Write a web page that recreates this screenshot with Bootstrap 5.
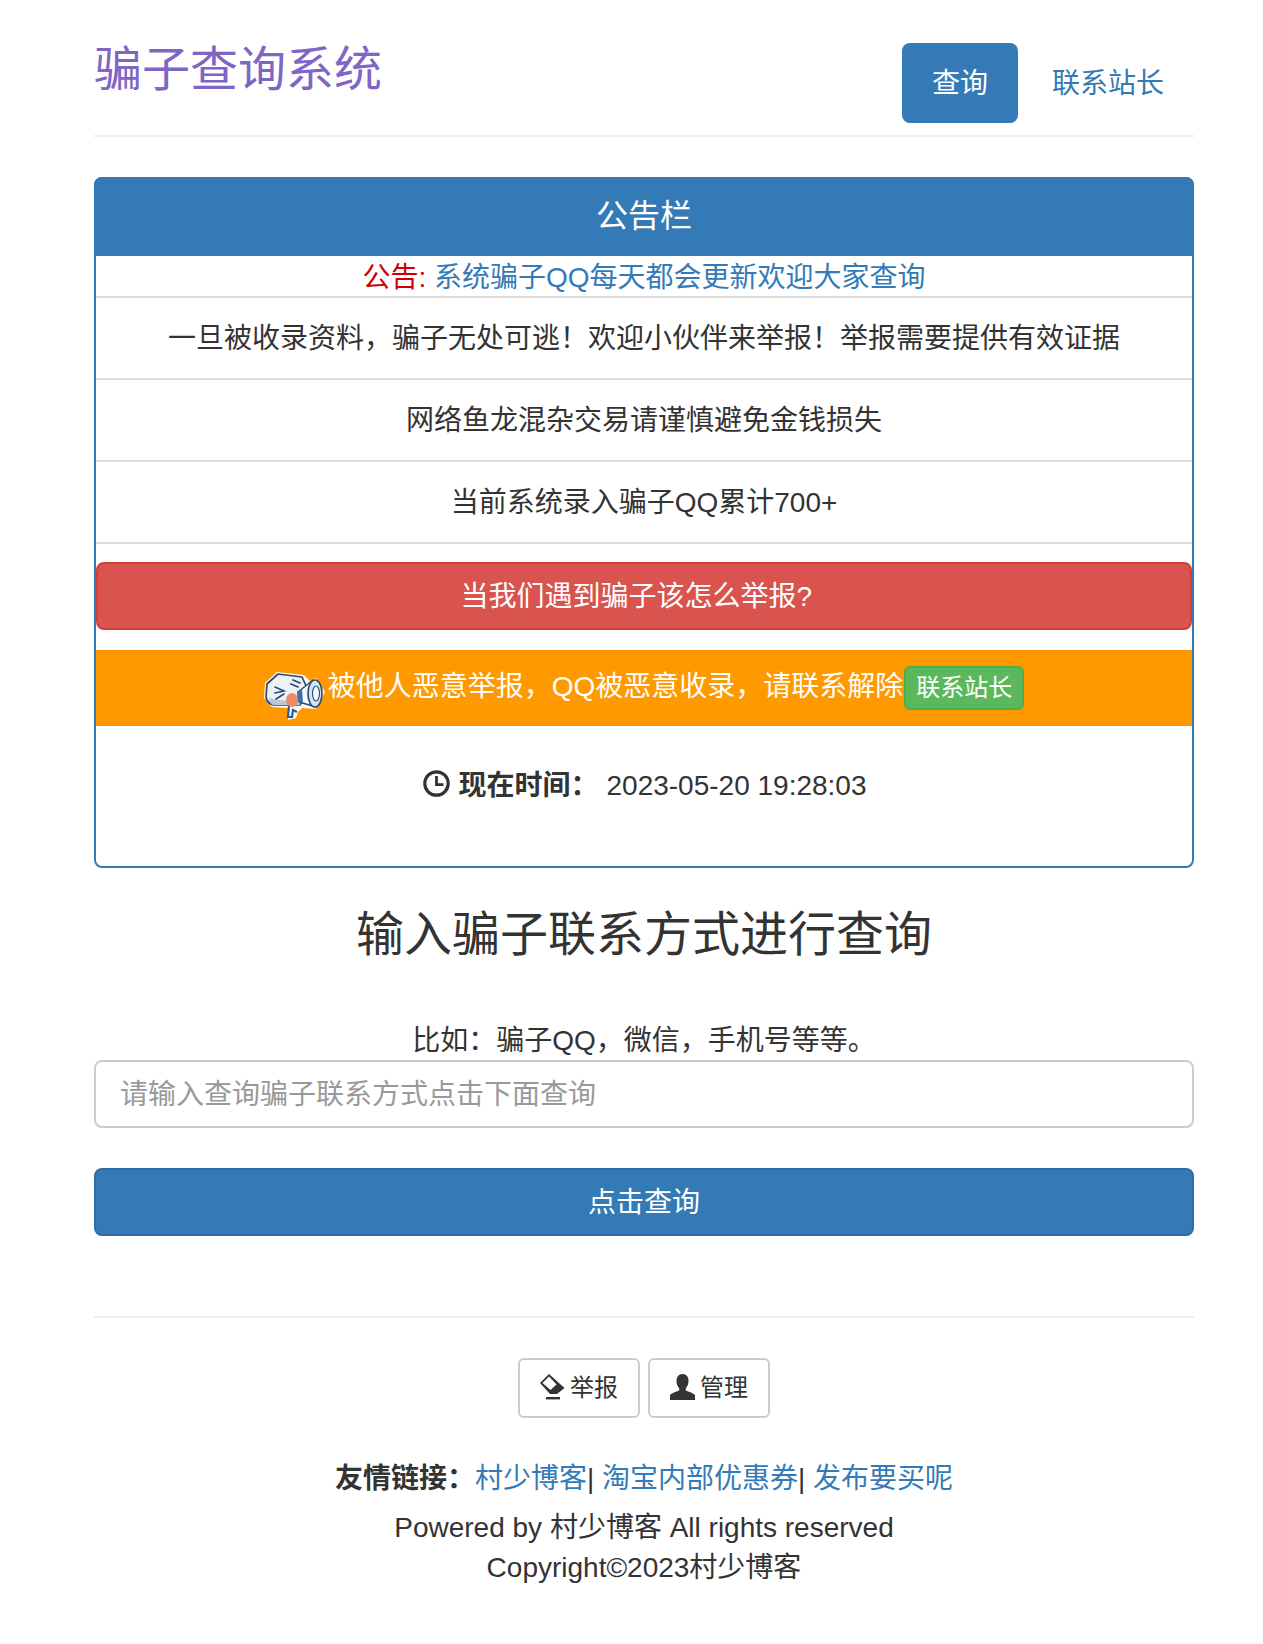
<!DOCTYPE html>
<html lang="zh-CN">
<head>
<meta charset="utf-8">
<title>骗子查询系统</title>
<link rel="stylesheet" href="https://cdn.jsdelivr.net/npm/bootstrap@5.3.0/dist/css/bootstrap.min.css">
<style>
html,body{background:#fff}
body{font-family:"Liberation Sans","Noto Sans CJK SC",sans-serif;font-size:28px;line-height:40px;color:#333;height:1644px;overflow:hidden}
a{color:#337ab7;text-decoration:none}
.page-wrap{width:1100px;margin-left:94px}
.site-head{padding-top:43px;padding-bottom:12px;border-bottom:2px solid #eee;margin-bottom:40px}
.site-title{font-size:48px;line-height:53px;color:#7f65c6;font-weight:400;margin:0}
.site-pills{gap:4px}
.site-pills .nav-link{font-size:28px;line-height:40px;padding:21px 30px 19px;color:#337ab7;border-radius:8px}
.site-pills .nav-link.active{background:#337ab7;color:#fff}
.notice-card{border:2px solid #337ab7;border-radius:8px;height:691px;display:block}
.notice-head{background:#337ab7;color:#fff;border:0;font-size:32px;line-height:35px;padding:22px 30px 22px;margin:-2px -2px 0;border-radius:8px 8px 0 0!important}
.notice-card>.notice-list{border:0}
.notice-list .list-group-item{font-size:28px;line-height:40px;color:#333;padding:21px 30px 19px;border-width:0 0 2px!important;border-style:solid;border-color:#ddd;background:#fff}
.notice-list .list-group-item.tight{padding:4px 0 0;line-height:36px}
.tag-red{color:#c00}
.warn-btn{display:block;width:100%;font-size:28px;line-height:40px;padding:13px 12px 11px;margin-top:18px;border:2px solid #d43f3a;background:#d9534f;color:#fff;border-radius:8px}
.warn-btn:hover{background:#d9534f;color:#fff;border-color:#d43f3a}
.orange-bar{background:#f90;color:#fff;height:76px;margin-top:20px}
.mascot{width:61px;height:48px;margin-right:3px;flex:none;margin-top:16px}
.orange-text{margin-top:-2px}
.contact-btn{font-size:24px;line-height:36px;padding:2px 10px;border:2px solid #4cae4c;background:#5cb85c;color:#fff;border-radius:6px;margin-top:0;margin-left:1px}
.contact-btn:hover{background:#5cb85c;color:#fff;border-color:#4cae4c}
.clock-row{margin-top:40px;gap:8px;padding-left:2px}
.clock-row b{font-weight:700}
.glyph-clock{width:27px;height:27px;margin-top:-5px}
.search-title{font-size:48px;line-height:53px;font-weight:400;margin:40px 0 0;color:#333}
.hint{margin:60px 0 -1px}
.query-input{height:68px;font-size:28px;line-height:40px;padding:13px 24px 11px;border:2px solid #ccc;border-radius:8px;color:#555;margin-bottom:40px}
.query-input::placeholder{color:#999}
.query-btn{display:block;width:100%;font-size:28px;line-height:40px;padding:13px 12px 11px;border:2px solid #2e6da4;background:#337ab7;color:#fff;border-radius:8px}
.query-btn:hover{background:#337ab7;color:#fff;border-color:#2e6da4}
.foot-rule{border-top:2px solid #eee;margin:80px 0 40px}
.foot-btns{gap:8px;margin-bottom:41px}
.plain-btn{font-size:24px;line-height:36px;padding:10px 20px;border:2px solid #ccc;background:#fff;color:#333;border-radius:6px;gap:5px}
.plain-btn:hover{background:#fff;color:#333;border-color:#ccc}
.glyph-small{width:25px;height:26px;flex:none;margin-top:-3px}
.friend-line{margin-bottom:9px}
.friend-line b{font-weight:700}
</style>
</head>
<body>
<div class="page-wrap">
  <header class="site-head d-flex justify-content-between align-items-start">
    <h3 class="site-title">骗子查询系统</h3>
    <ul class="nav nav-pills site-pills">
      <li class="nav-item"><a class="nav-link active" href="#">查询</a></li>
      <li class="nav-item"><a class="nav-link" href="#">联系站长</a></li>
    </ul>
  </header>

  <section class="card notice-card">
    <div class="card-header notice-head text-center">公告栏</div>
    <ul class="list-group list-group-flush notice-list text-center">
      <li class="list-group-item tight"><span class="tag-red">公告:</span> <a href="#">系统骗子QQ每天都会更新欢迎大家查询</a></li>
      <li class="list-group-item">一旦被收录资料&#xFF0C;骗子无处可逃&#xFF01;欢迎小伙伴来举报&#xFF01;举报需要提供有效证据</li>
      <li class="list-group-item">网络鱼龙混杂交易请谨慎避免金钱损失</li>
      <li class="list-group-item">当前系统录入骗子QQ累计700+</li>
    </ul>
    <a class="btn warn-btn" href="#">当我们遇到骗子该怎么举报?&nbsp;&nbsp;</a>
    <div class="orange-bar d-flex justify-content-center align-items-center">
      <svg class="mascot" viewBox="0 0 61 48" aria-hidden="true">
        <path d="M1 11 13 0 40 3 46 9 52 6 61 20 52 37 38 36 34 40 32 46 24 48 24 36 8 35 0 26Z" fill="#fdfbf6"/>
        <path d="M3 12 14 2 38 5 44 18 36 33 9 33Q3 31 2 25Z" fill="#eef1f6" stroke="#2b4a73" stroke-width="1.7" stroke-linejoin="round"/>
        <path d="M5 26Q20 30 34 29L36 33 9 33Q5 31 5 26Z" fill="#b9c7d9"/>
        <path d="M11 15 20 19 11 21M12 27 20 22" fill="none" stroke="#2b4a73" stroke-width="1.6" stroke-linecap="round"/>
        <path d="M29 8 36 11M27 12 34 15" stroke="#2b4a73" stroke-width="1.7" stroke-linecap="round"/>
        <path d="M25 34 24 45 28 45 29 38 33 40" fill="none" stroke="#2b5d94" stroke-width="2.2"/>
        <ellipse cx="28" cy="28" rx="6" ry="7" fill="#ef8a66"/>
        <path d="M34 20 49 8 52 35 35 30Z" fill="#f4f7fb" stroke="#2b4a73" stroke-width="1.500" stroke-linejoin="round"/>
        <path d="M33 20 38 17 39 31 34 30Z" fill="#3f6fa8"/>
        <ellipse cx="51" cy="21.500" rx="7" ry="13.500" fill="#d3e3f3" stroke="#2b4a73" stroke-width="1.600"/>
        <ellipse cx="52" cy="21.500" rx="3.500" ry="7.500" fill="#f2f6fb" stroke="#2b4a73" stroke-width="1.100"/>
      </svg>
      <span class="orange-text">被他人恶意举报&#xFF0C;QQ被恶意收录&#xFF0C;请联系解除</span>
      <a class="btn contact-btn" href="#">联系站长</a>
    </div>
    <div class="clock-row d-flex justify-content-center align-items-center">
      <svg class="glyph-clock" viewBox="0 0 27 27" aria-hidden="true"><circle cx="13.500" cy="13.500" r="11.700" fill="none" stroke="#333" stroke-width="3.200"/><path d="M13.500 6V14.700H20.500" fill="none" stroke="#333" stroke-width="2.800"/></svg>
      <b>现在时间&#xFF1A;</b>
      <span>2023-05-20 19:28:03</span>
    </div>
  </section>

  <h3 class="search-title text-center">输入骗子联系方式进行查询</h3>
  <p class="hint text-center">比如&#xFF1A;骗子QQ&#xFF0C;微信&#xFF0C;手机号等等。</p>
  <input class="form-control query-input" type="text" placeholder="请输入查询骗子联系方式点击下面查询">
  <button class="btn query-btn" type="button">点击查询</button>

  <div class="foot-rule"></div>
  <div class="foot-btns d-flex justify-content-center">
    <a class="btn plain-btn d-inline-flex align-items-center" href="#">
      <svg class="glyph-small" viewBox="0 0 25 26" aria-hidden="true"><path d="M9 0 0 9 10 20H17L24.500 14Z" fill="#333"/><path d="M9 2.500 2.500 9 10.500 16 16.500 10.500Z" fill="#fff"/><rect x="6" y="23" width="14" height="2.400" fill="#333"/></svg>举报</a>
    <a class="btn plain-btn d-inline-flex align-items-center" href="#">
      <svg class="glyph-small" viewBox="0 0 25 26" aria-hidden="true"><path d="M12.500 0C16.500 0 18.500 3 18.500 7c0 3-1.200 5.600-2.700 7.300v2.200c3 1.300 8 2.600 9.200 4.700V26H0v-4.800C1.200 19.100 6.200 17.800 9.200 16.500v-2.200C7.700 12.600 6.500 10 6.500 7 6.500 3 8.500 0 12.500 0Z" fill="#333"/></svg>管理</a>
  </div>
  <div class="friend-line text-center"><b>友情链接&#xFF1A;</b><a href="#">村少博客</a>| <a href="#">淘宝内部优惠券</a>| <a href="#">发布要买呢</a></div>
  <div class="text-center">Powered by 村少博客 All rights reserved<br>Copyright©2023村少博客</div>
</div>
<script src="https://cdn.jsdelivr.net/npm/bootstrap@5.3.0/dist/js/bootstrap.bundle.min.js"></script>
</body>
</html>
